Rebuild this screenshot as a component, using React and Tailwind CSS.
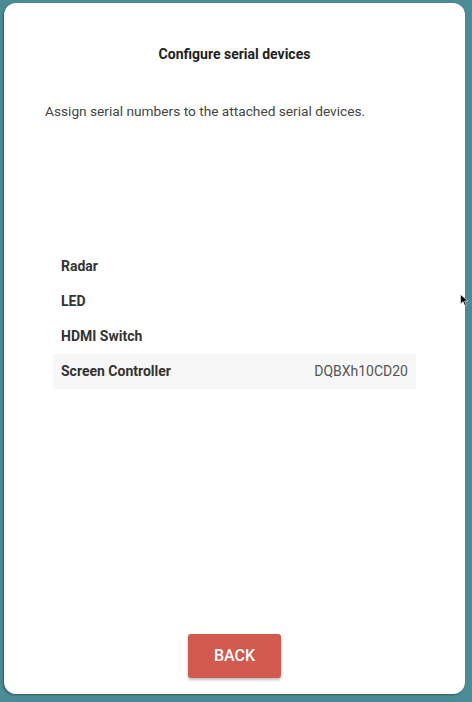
import React from 'react';

const devices = [
  { name: 'Radar', serial: '' },
  { name: 'LED', serial: '' },
  { name: 'HDMI Switch', serial: '' },
  { name: 'Screen Controller', serial: 'DQBXh10CD20', selected: true },
];

function App() {
  return (
    <div className="relative w-[472px] h-[702px] bg-[#4a8b95] pt-[3px] pl-[4px] font-['Roboto',sans-serif] overflow-hidden">
      <div className="w-[461px] h-[691px] bg-white rounded-[12px] shadow-[-1px_1px_2px_rgba(0,0,0,0.35)] flex flex-col">
        <h1 className="pt-[41px] text-center text-[14px] leading-[20px] font-bold text-[#222]">
          Configure serial devices
        </h1>

        <p className="mt-[37px] px-[41px] text-[13.7px] leading-[20px] text-[#444]">
          Assign serial numbers to the attached serial devices.
        </p>

        {/* device list */}
        <div className="mt-[128px] mx-[49px] flex flex-col">
          {devices.map((d) => (
            <div
              key={d.name}
              className={`h-[35px] px-[8px] flex items-center justify-between text-[14px] ${d.selected ? 'bg-[#f7f7f7]' : ''}`}
            >
              <span className="font-bold text-[#333]">{d.name}</span>
              <span className="text-[#555]">{d.serial}</span>
            </div>
          ))}
        </div>

        <div className="mt-auto mb-[16px] flex justify-center">
          <button className="w-[93px] h-[44px] rounded-[3px] bg-[#d2594e] text-white text-[16px] font-medium shadow-[0_2px_3px_rgba(0,0,0,0.25)]">
            BACK
          </button>
        </div>
      </div>

      {/* mouse pointer */}
      <svg className="absolute left-[460px] top-[294px]" width="9" height="13" viewBox="0 0 9 13">
        <path d="M0.5 0.5 L0.5 10 L3 7.6 L5 12 L6.5 11.3 L4.6 7 L8 7 Z" fill="#000" stroke="#fff" strokeWidth="0.6" />
      </svg>
    </div>
  );
}

export default App;
